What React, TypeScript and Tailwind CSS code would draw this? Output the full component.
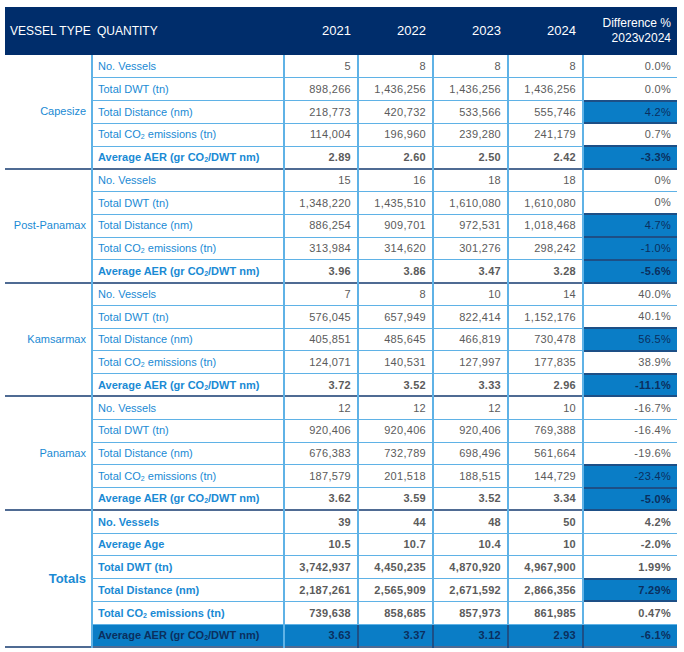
/** AER table by vessel type, 2021-2024 */

import React from 'react'

type Row = {
  label: React.ReactNode
  values: string[]
  diff: string
  bold?: boolean
  hl?: boolean
  full?: boolean
}

type Group = { name: string; rows: Row[]; totals?: boolean }

const CO2 = (
  <>
    CO<sub className="relative top-[1px] text-[7px]">2</sub>
  </>
)

const aer = <>Average AER (gr {CO2}/DWT nm)</>
const co2 = <>Total {CO2} emissions (tn)</>

const groups: Group[] = [
  {
    name: 'Capesize',
    rows: [
      { label: 'No. Vessels', values: ['5', '8', '8', '8'], diff: '0.0%' },
      { label: 'Total DWT (tn)', values: ['898,266', '1,436,256', '1,436,256', '1,436,256'], diff: '0.0%' },
      { label: 'Total Distance (nm)', values: ['218,773', '420,732', '533,566', '555,746'], diff: '4.2%', hl: true },
      { label: co2, values: ['114,004', '196,960', '239,280', '241,179'], diff: '0.7%' },
      { label: aer, values: ['2.89', '2.60', '2.50', '2.42'], diff: '-3.3%', bold: true, hl: true },
    ],
  },
  {
    name: 'Post-Panamax',
    rows: [
      { label: 'No. Vessels', values: ['15', '16', '18', '18'], diff: '0%' },
      { label: 'Total DWT (tn)', values: ['1,348,220', '1,435,510', '1,610,080', '1,610,080'], diff: '0%' },
      { label: 'Total Distance (nm)', values: ['886,254', '909,701', '972,531', '1,018,468'], diff: '4.7%', hl: true },
      { label: co2, values: ['313,984', '314,620', '301,276', '298,242'], diff: '-1.0%', hl: true },
      { label: aer, values: ['3.96', '3.86', '3.47', '3.28'], diff: '-5.6%', bold: true, hl: true },
    ],
  },
  {
    name: 'Kamsarmax',
    rows: [
      { label: 'No. Vessels', values: ['7', '8', '10', '14'], diff: '40.0%' },
      { label: 'Total DWT (tn)', values: ['576,045', '657,949', '822,414', '1,152,176'], diff: '40.1%' },
      { label: 'Total Distance (nm)', values: ['405,851', '485,645', '466,819', '730,478'], diff: '56.5%', hl: true },
      { label: co2, values: ['124,071', '140,531', '127,997', '177,835'], diff: '38.9%' },
      { label: aer, values: ['3.72', '3.52', '3.33', '2.96'], diff: '-11.1%', bold: true, hl: true },
    ],
  },
  {
    name: 'Panamax',
    rows: [
      { label: 'No. Vessels', values: ['12', '12', '12', '10'], diff: '-16.7%' },
      { label: 'Total DWT (tn)', values: ['920,406', '920,406', '920,406', '769,388'], diff: '-16.4%' },
      { label: 'Total Distance (nm)', values: ['676,383', '732,789', '698,496', '561,664'], diff: '-19.6%' },
      { label: co2, values: ['187,579', '201,518', '188,515', '144,729'], diff: '-23.4%', hl: true },
      { label: aer, values: ['3.62', '3.59', '3.52', '3.34'], diff: '-5.0%', bold: true, hl: true },
    ],
  },
  {
    name: 'Totals',
    totals: true,
    rows: [
      { label: 'No. Vessels', values: ['39', '44', '48', '50'], diff: '4.2%', bold: true },
      { label: 'Average Age', values: ['10.5', '10.7', '10.4', '10'], diff: '-2.0%', bold: true },
      { label: 'Total DWT (tn)', values: ['3,742,937', '4,450,235', '4,870,920', '4,967,900'], diff: '1.99%', bold: true },
      { label: 'Total Distance (nm)', values: ['2,187,261', '2,565,909', '2,671,592', '2,866,356'], diff: '7.29%', bold: true, hl: true },
      { label: co2, values: ['739,638', '858,685', '857,973', '861,985'], diff: '0.47%', bold: true },
      { label: aer, values: ['3.63', '3.37', '3.12', '2.93'], diff: '-6.1%', bold: true, full: true },
    ],
  },
]

const font = { fontFamily: '"Liberation Sans", Arial, sans-serif' }

export default function App() {
  return (
    <div className="h-[652px] w-[684px] bg-white pt-[7px] pl-[5px]" style={font}>
      <table className="w-[672px] table-fixed border-collapse">
        <colgroup>
          <col className="w-[87px]" />
          <col className="w-[192px]" />
          <col className="w-[74px]" />
          <col className="w-[75px]" />
          <col className="w-[75px]" />
          <col className="w-[75px]" />
          <col className="w-[94px]" />
        </colgroup>
        <thead>
          <tr className="h-[48px] bg-[#002d6b] text-white">
            <th className="pl-[5px] text-left text-[12px] font-normal whitespace-nowrap">VESSEL TYPE</th>
            <th className="pl-[5px] text-left text-[12px] font-normal">QUANTITY</th>
            {['2021', '2022', '2023', '2024'].map((y) => (
              <th key={y} className="pr-[7px] text-right text-[13px] font-normal">
                {y}
              </th>
            ))}
            <th className="pr-[6px] text-right text-[12px] leading-[15px] font-normal">
              Difference %
              <br />
              2023v2024
            </th>
          </tr>
        </thead>
        <tbody>
          {groups.map((g) =>
            g.rows.map((r, i) => {
              const last = i === g.rows.length - 1
              const rowBorder = last ? 'border-b-2 border-b-[#4f6b93]' : 'border-b-[1.5px] border-b-[#5fb2e6]'
              const cellHl = r.full ? 'bg-[#0a7dc6] text-[#0b2f5e]' : ''
              const txt = r.bold ? 'font-bold' : ''
              return (
                <tr key={g.name + i} className={`h-[22.77px] ${rowBorder}`}>
                  {i === 0 && (
                    <td
                      rowSpan={g.rows.length}
                      className={`border-r-2 border-r-[#5fb2e6] pr-[5px] text-right text-[#1a8ad4] ${
                        g.totals ? 'text-[13px] font-bold' : 'text-[11px]'
                      }`}
                    >
                      {g.name}
                    </td>
                  )}
                  <td
                    className={`border-r-2 border-r-[#5fb2e6] pl-[5px] text-[11px] whitespace-nowrap ${txt} ${
                      r.full ? 'border-r-[#1d4f86] bg-[#0a7dc6] text-[#0b2f5e]' : 'text-[#1a8ad4]'
                    }`}
                  >
                    {r.label}
                  </td>
                  {r.values.map((v, j) => (
                    <td
                      key={j}
                      className={`border-r-2 pr-[6px] text-right text-[11px] tracking-[0.3px] ${txt} ${
                        r.full ? `border-r-[#1d4f86] ${cellHl}` : 'border-r-[#5fb2e6] text-[#5b5b5b]'
                      }`}
                    >
                      {v}
                    </td>
                  ))}
                  <td
                    className={`pr-[6px] text-right text-[11px] tracking-[0.3px] ${txt} ${
                      r.hl
                        ? 'border-y-2 border-y-[#1d4f86] bg-[#0a7dc6] text-[#0b2f5e]'
                        : r.full
                          ? cellHl
                          : 'text-[#5b5b5b]'
                    }`}
                  >
                    {r.diff}
                  </td>
                </tr>
              )
            }),
          )}
        </tbody>
      </table>
    </div>
  )
}
